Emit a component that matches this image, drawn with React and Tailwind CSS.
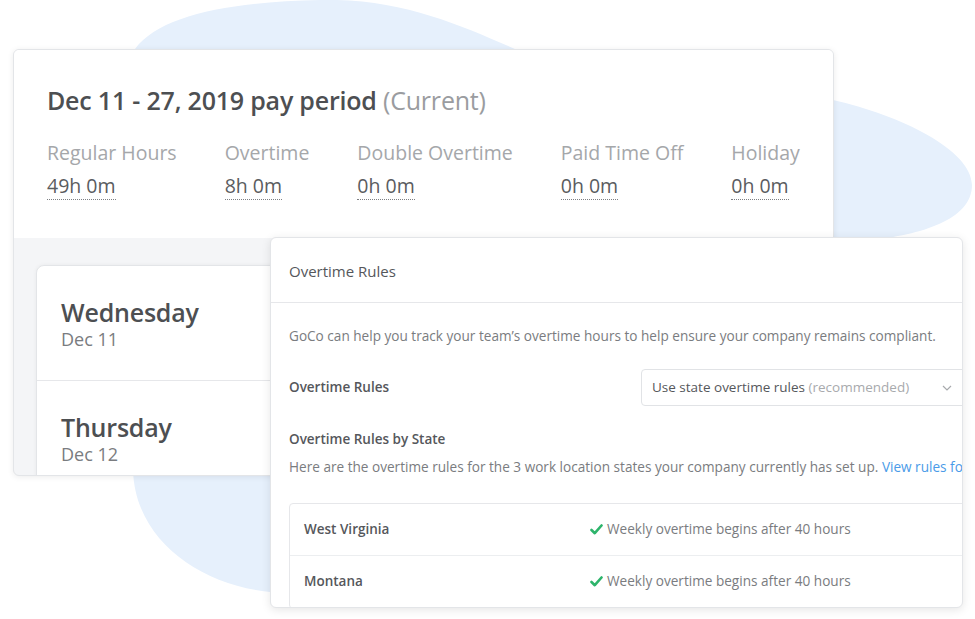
const font = { fontFamily: '"Open Sans", Lato, Arial, sans-serif' };

const totals = [
  { label: 'Regular Hours', value: '49h 0m' },
  { label: 'Overtime', value: '8h 0m' },
  { label: 'Double Overtime', value: '0h 0m' },
  { label: 'Paid Time Off', value: '0h 0m' },
  { label: 'Holiday', value: '0h 0m' },
];

const days = [
  { day: 'Wednesday', date: 'Dec 11' },
  { day: 'Thursday', date: 'Dec 12' },
];

const states = ['West Virginia', 'Montana'];

function Blob() {
  return (
    <svg className="absolute inset-0" width="975" height="619" viewBox="0 0 975 619">
      <path
        fill="#e6f0fc"
        d="M135 49 C160 15 230 2 320 0 C400 -2 460 25 515 49 L833 100 C900 115 972 150 972 185 C972 220 920 235 870 240 L870 600 L270 592 C200 585 135 540 133 470 Z"
      />
    </svg>
  );
}

function Check() {
  return (
    <svg width="13" height="11" viewBox="0 0 13 11" className="shrink-0">
      <path d="M1.5 6 L4.8 9.2 L11.5 1.5" fill="none" stroke="#2db46b" strokeWidth="2.6" strokeLinecap="round" strokeLinejoin="round" />
    </svg>
  );
}

function PayPeriodCard() {
  return (
    <div className="absolute left-[13px] top-[49px] flex h-[427px] w-[821px] flex-col overflow-hidden rounded-[6px] border border-[#e3e5e8] bg-[#f4f5f7] shadow-[0_1px_6px_rgba(0,0,0,0.08)]">
      <div className="h-[188px] shrink-0 bg-white px-[33px] pt-[35px]">
        <h2 className="text-[25px] leading-[30px] font-semibold tracking-[-0.2px] text-[#4d4f52]">
          Dec 11 - 27, 2019 pay period <span className="font-normal text-[#9a9ca0]">(Current)</span>
        </h2>
        <div className="mt-[25px] flex gap-[48px]">
          {totals.map((t) => (
            <div key={t.label} className="flex shrink-0 flex-col items-start whitespace-nowrap">
              <span className="text-[19.5px] leading-[25px] text-[#a5a7aa]">{t.label}</span>
              <span className="mt-[9px] border-b border-dotted border-[#7d7f83] pb-[1px] text-[19.5px] leading-[24px] text-[#5a5c60]">
                {t.value}
              </span>
            </div>
          ))}
        </div>
      </div>
      <div className="flex-1 pl-[22px] pt-[27px]">
        <div className="h-full rounded-tl-[8px] border border-[#e3e5e8] bg-white shadow-[0_0_4px_rgba(0,0,0,0.05)]">
          {days.map((d, i) => (
            <div key={d.day} className={`h-[115px] pl-[24px] pt-[31px] ${i === 0 ? 'border-b border-[#e6e7ea]' : ''}`}>
              <div className="text-[25px] leading-[30px] font-semibold tracking-[-0.2px] text-[#4d4f52]">{d.day}</div>
              <div className="text-[18px] leading-[24px] text-[#7a7c80]">{d.date}</div>
            </div>
          ))}
        </div>
      </div>
    </div>
  );
}

function OvertimeRulesCard() {
  return (
    <div className="absolute left-[270px] top-[237px] h-[371px] w-[693px] overflow-hidden rounded-[6px] border border-[#e3e5e8] bg-white shadow-[0_2px_10px_rgba(0,0,0,0.1)]">
      <div className="flex h-[65px] items-center border-b border-[#e6e7ea] px-[18px] pt-[2px]">
        <span className="text-[15px] text-[#55575b]">Overtime Rules</span>
      </div>
      <div className="pl-[18px]">
        <p className="mt-[23px] whitespace-nowrap text-[13.6px] leading-[20px] text-[#7a7c80]">
          GoCo can help you track your team’s overtime hours to help ensure your company remains compliant.
        </p>
        <div className="mt-[23px] flex items-center">
          <span className="w-[352px] shrink-0 text-[13.5px] font-semibold text-[#55575b]">Overtime Rules</span>
          <div className="flex h-[37px] w-[330px] shrink-0 items-center rounded-[4px] border border-[#e1e3e6] pl-[10px] pr-[18px]">
            <span className="whitespace-nowrap text-[13.5px] text-[#55575b]">
              Use state overtime rules <span className="text-[#a8aaad]">(recommended)</span>
            </span>
            <svg width="10" height="6" viewBox="0 0 10 6" className="ml-auto">
              <path d="M1 1 L5 5 L9 1" fill="none" stroke="#a8aaad" strokeWidth="1.2" />
            </svg>
          </div>
        </div>
        <div className="mt-[23px] text-[13.5px] leading-[20px] font-semibold text-[#55575b]">Overtime Rules by State</div>
        <p className="mt-[8px] whitespace-nowrap text-[13.6px] leading-[20px] text-[#7a7c80]">
          Here are the overtime rules for the 3 work location states your company currently has set up.{' '}
          <span className="text-[#4a9be8]">View rules fo</span>
        </p>
        <div className="mt-[26px] w-[720px] rounded-[4px] border border-[#e6e7ea]">
          {states.map((s) => (
            <div key={s} className="flex h-[52px] items-center border-b border-[#eceef0] pl-[14px]">
              <span className="w-[286px] text-[13.5px] font-semibold text-[#55575b]">{s}</span>
              <span className="flex items-center gap-[4px] text-[13.6px] text-[#7a7c80]">
                <Check />
                Weekly overtime begins after 40 hours
              </span>
            </div>
          ))}
        </div>
      </div>
    </div>
  );
}

export default function App() {
  return (
    <div className="relative h-[619px] w-[975px] overflow-hidden bg-white" style={font}>
      <Blob />
      <PayPeriodCard />
      <OvertimeRulesCard />
    </div>
  );
}
